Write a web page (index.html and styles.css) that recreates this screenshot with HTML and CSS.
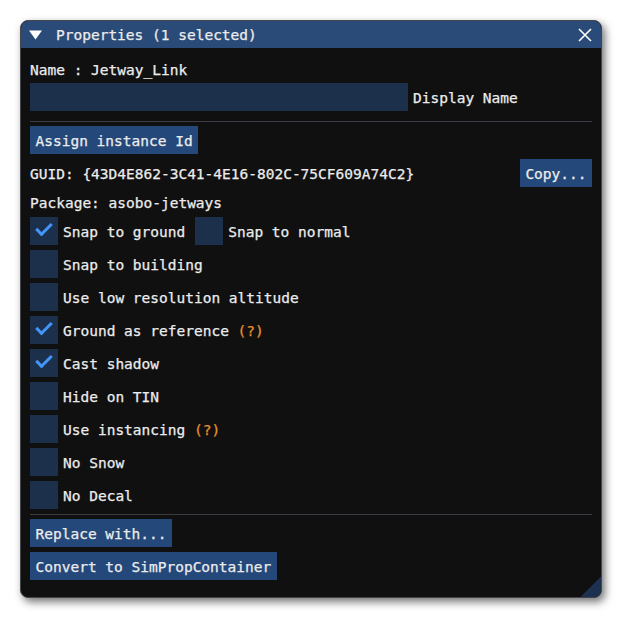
FILE: index.html
```html
<!doctype html>
<html lang="en">
<head>
  <meta charset="utf-8">
  <title>Properties</title>
  <link rel="stylesheet" href="styles.css">
</head>
<body>
  <div class="window">
    <div class="titlebar">
      <svg class="collapse" width="13" height="10" viewBox="0 0 13 10"><polygon points="0,0.5 13,0.5 6.5,9.5" fill="#fff"/></svg>
      <span class="title">Properties (1 selected)</span>
      <svg class="close" width="14" height="14" viewBox="0 0 14 14"><path d="M1 1L13 13M13 1L1 13" stroke="#fff" stroke-width="1.6" fill="none"/></svg>
    </div>

    <div class="content">
      <div class="row"><span class="txt">Name : Jetway_Link</span></div>
      <div class="row">
        <div class="input"></div>
        <span class="txt label">Display Name</span>
      </div>

      <div class="sep sep-top"></div>

      <div class="row"><button class="btn">Assign instance Id</button></div>
      <div class="row guid">
        <span class="txt">GUID: {43D4E862-3C41-4E16-802C-75CF609A74C2}</span>
        <button class="btn">Copy...</button>
      </div>
      <div class="pkg">Package: asobo-jetways</div>

      <div class="checks">
        <div class="row">
          <span class="cb on"></span><span class="txt cb-label">Snap to ground</span>
          <span class="cb same"></span><span class="txt cb-label">Snap to normal</span>
        </div>
        <div class="row"><span class="cb"></span><span class="txt cb-label">Snap to building</span></div>
        <div class="row"><span class="cb"></span><span class="txt cb-label">Use low resolution altitude</span></div>
        <div class="row"><span class="cb on"></span><span class="txt cb-label">Ground as reference <span class="help">(?)</span></span></div>
        <div class="row"><span class="cb on"></span><span class="txt cb-label">Cast shadow</span></div>
        <div class="row"><span class="cb"></span><span class="txt cb-label">Hide on TIN</span></div>
        <div class="row"><span class="cb"></span><span class="txt cb-label">Use instancing <span class="help">(?)</span></span></div>
        <div class="row"><span class="cb"></span><span class="txt cb-label">No Snow</span></div>
        <div class="row"><span class="cb"></span><span class="txt cb-label">No Decal</span></div>
      </div>

      <div class="sep sep-bottom"></div>

      <div class="actions">
        <div class="row"><button class="btn">Replace with...</button></div>
        <div class="row"><button class="btn">Convert to SimPropContainer</button></div>
      </div>
    </div>

    <div class="grip"></div>
  </div>
</body>
</html>
```

FILE: styles.css
```css
:root{
  --bg:#101010; --title:#2a4a78; --frame:#1c304c; --btn:#24487a;
  --fg:#ececec; --sep:#3c3c44; --check:#4296fa; --help:#e8902c;
}
html,body{margin:0;padding:0;background:#fff}
body{padding:20px}
.window{
  position:relative;box-sizing:border-box;width:582px;height:578px;
  background:var(--bg);border:1px solid #45454c;border-radius:8px;
  box-shadow:3px 4px 8px rgba(0,0,0,.55);overflow:hidden;
  font-family:"DejaVu Sans Mono","Liberation Mono",monospace;font-size:14.5px;color:var(--fg);
  -webkit-text-stroke:.25px currentColor
}
.titlebar{
  height:27px;background:var(--title);display:flex;align-items:center;
  padding:0 9px 0 8px
}
.collapse{margin-top:1px}
.title{margin-left:14px;flex:1;line-height:1;padding-top:1px}
.content{padding:7px 9px 0 9px}
.row{height:28px;display:flex;align-items:center;white-space:pre}
.txt{padding-top:2px}
.input{width:378px;height:28px;background:var(--frame)}
.label{margin-left:5px}
.sep{height:1px;background:var(--sep)}
.sep-top{margin:10px 0 4px}
.sep-bottom{margin:5px 0 4px}
.btn{
  height:28px;padding:2px 5.5px 0;border:0;margin:0;background:var(--btn);color:var(--fg);
  font:inherit;white-space:pre;cursor:pointer;-webkit-text-stroke:.25px currentColor
}
.guid{margin-top:5px;justify-content:space-between}
.pkg{margin-top:7px;height:17px;line-height:19px}
.checks{margin-top:6px;display:flex;flex-direction:column;gap:5px}
.cb{position:relative;width:28px;height:28px;background:var(--frame);flex:none}
.cb.on::after{
  content:"";position:absolute;left:6px;top:6px;width:13px;height:6px;
  border-left:3.5px solid var(--check);border-bottom:3.5px solid var(--check);
  transform:rotate(-45deg);transform-origin:center
}
.cb-label{margin-left:5px}
.same{margin-left:10px}
.help{color:var(--help)}
.actions{display:flex;flex-direction:column;gap:5px}
.grip{
  position:absolute;right:0;bottom:0;width:21px;height:21px;
  background:linear-gradient(135deg,transparent 50%,#1c3050 50%)
}
```
